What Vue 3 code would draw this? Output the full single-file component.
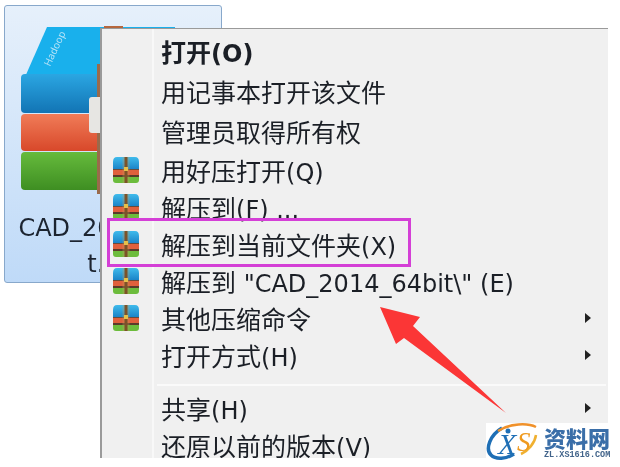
<script setup>
const rows = [
  { label: "打开(O)", h: 40, bold: true },
  { label: "用记事本打开该文件", h: 40 },
  { label: "管理员取得所有权", h: 40 },
  { label: "用好压打开(Q)", h: 37, icon: true },
  { label: "解压到(F) ...", h: 37, icon: true },
  { label: "解压到当前文件夹(X)", h: 37, icon: true },
  { label: "解压到 \"CAD_2014_64bit\\\" (E)", h: 37, icon: true },
  { label: "其他压缩命令", h: 37, icon: true, sub: true },
  { label: "打开方式(H)", h: 38, sub: true },
  { sep: true },
  { label: "共享(H)", h: 37, sub: true },
  { label: "还原以前的版本(V)", h: 38 },
];

// latin runs are set a bit smaller than the CJK ones
const parts = (label) => label.split(/([\x00-\x7f]+)/).filter(Boolean);
const isLatin = (s) => /^[\x00-\x7f]/.test(s);
</script>

<template>
  <div class="page">
    <div class="tile">
      <svg class="book" width="215" height="180" viewBox="0 0 215 180">
        <defs>
          <linearGradient id="blue" x1="0" y1="0" x2="0" y2="1">
            <stop offset="0" stop-color="#2ba6e2" />
            <stop offset="1" stop-color="#1274b4" />
          </linearGradient>
          <linearGradient id="orange" x1="0" y1="0" x2="0" y2="1">
            <stop offset="0" stop-color="#f07c58" />
            <stop offset="1" stop-color="#d8482a" />
          </linearGradient>
          <linearGradient id="green" x1="0" y1="0" x2="0" y2="1">
            <stop offset="0" stop-color="#66bb3c" />
            <stop offset="1" stop-color="#3e8e22" />
          </linearGradient>
        </defs>
        <path d="M42 1 L170 1 L170 60 L16 60 Z" fill="#19b0ec" />
        <rect x="99" y="0" width="19" height="6" fill="#b5673f" />
        <text x="0" y="0" transform="translate(45 41) rotate(-65)" class="book-label">Hadoop</text>
        <rect x="16" y="48" width="84" height="39" rx="4" fill="url(#blue)" />
        <rect x="16" y="88" width="84" height="37" rx="4" fill="url(#orange)" />
        <rect x="16" y="126" width="84" height="38" rx="4" fill="url(#green)" />
        <rect x="92" y="38" width="8" height="130" fill="#9a6a4b" />
        <rect x="84" y="71" width="16" height="36" rx="3" fill="#e7e6e3" />
      </svg>
      <div class="tile-name">CAD_2014_64bi<br />t.rar</div>
    </div>

    <div class="menu">
      <template v-for="(row, i) in rows" :key="i">
        <div v-if="row.sep" class="sep"></div>
        <div v-else class="row" :class="{ bold: row.bold }" :style="{ height: row.h + 'px' }">
          <div class="gutter">
            <svg v-if="row.icon" width="28" height="28" viewBox="0 0 28 28">
              <defs>
                <linearGradient :id="'top' + i" x1="0" y1="0" x2="0" y2="1">
                  <stop offset="0" stop-color="#3fbbec" />
                  <stop offset="1" stop-color="#1b84c8" />
                </linearGradient>
              </defs>
              <path d="M5 1 H23 Q27 1 27 6 V13 H1 V6 Q1 1 5 1 Z" :fill="'url(#top' + i + ')'" />
              <rect x="1" y="13" width="26" height="1" fill="#6a4a3a" />
              <rect x="1" y="14" width="26" height="5" fill="#e0603c" />
              <rect x="1" y="19" width="26" height="2" fill="#5a3a2a" />
              <path d="M1 21 H27 V24 Q27 27 24 27 H4 Q1 27 1 24 Z" fill="#6cbc3c" />
              <rect x="10.5" y="1" width="7" height="26" fill="#c09a5c" opacity="0.35" />
              <rect x="12.5" y="1" width="3" height="26" fill="#7c5228" />
              <rect x="12" y="11" width="4" height="4" fill="#e6c04a" />
            </svg>
          </div>
          <span class="label"><span v-for="(p, k) in parts(row.label)" :key="k" :class="{ latin: isLatin(p) }">{{ p }}</span></span>
          <i v-if="row.sub" class="caret"></i>
        </div>
      </template>
    </div>

    <div class="mark"></div>

    <svg class="arrow" width="130" height="110" viewBox="0 0 130 110">
      <path d="M1 2 L41 12 L34 21 L127 108 L25 33 L17 39 Z" fill="#fb3636" />
    </svg>

    <div class="stamp">
      <svg class="stamp-logo" width="56" height="40" viewBox="0 0 56 40">
        <path d="M16 5 C4 12 -1 26 5 32 C10 37 20 36 28 31" fill="none" stroke="#1f6fb5" stroke-width="3.5" />
        <path d="M12 8 C24 0 42 0 50 4" fill="none" stroke="#f0912a" stroke-width="2.5" />
        <path d="M35 31 C42 28 49 20 50 12" fill="none" stroke="#f0b030" stroke-width="2.5" />
        <circle cx="22" cy="8" r="2.5" fill="#1f6fb5" />
        <text x="12" y="31" class="logo-x">X</text>
        <text x="31" y="28" class="logo-s">S</text>
      </svg>
      <div class="stamp-text">
        <div class="stamp-cn">资料网</div>
        <div class="stamp-url">ZL.XS1616.COM</div>
      </div>
    </div>
  </div>
</template>

<style>
html, body {
  margin: 0;
  background: #fff;
}
</style>

<style scoped>
.page {
  position: relative;
  width: 620px;
  height: 467px;
  overflow: hidden;
  background: #fff;
  font-family: "DejaVu Sans", "Noto Sans CJK SC", sans-serif;
  filter: blur(0.4px);
}

.tile {
  position: absolute;
  left: 4px;
  top: 5px;
  width: 216px;
  height: 276px;
  border: 1px solid #88a8cb;
  border-radius: 3px;
  background: linear-gradient(#e6f0fb, #bfdaf8);
}

.book {
  position: absolute;
  left: 0;
  top: 20px;
}

.book-label {
  font-family: "Open Sans", sans-serif;
  font-size: 10px;
  fill: #bfe6f8;
}

.tile-name {
  position: absolute;
  top: 204px;
  left: 0;
  width: 216px;
  text-align: center;
  font-size: 24px;
  line-height: 36px;
  color: #1c2430;
  white-space: nowrap;
}

.menu {
  position: absolute;
  left: 100px;
  top: 28px;
  width: 508px;
  height: 430px;
  box-sizing: border-box;
  overflow: hidden;
  padding-top: 2px;
  background: #f0f0f0;
  border-top: 1px solid #9a9a9a;
  border-left: 2px solid #9a9a9a;
}

.row {
  position: relative;
  display: flex;
  align-items: center;
}

.gutter {
  flex: none;
  box-sizing: border-box;
  width: 59px;
  height: 100%;
  display: flex;
  align-items: center;
  padding-left: 10px;
  font-size: 0;
}

.label {
  font-size: 25px;
  color: #1b1f26;
  white-space: nowrap;
}

.latin {
  font-size: 24px;
}

.bold .label {
  font-weight: 700;
}

.caret {
  position: absolute;
  left: 483px;
  top: 50%;
  margin-top: -5px;
  border-left: 6px solid #222;
  border-top: 5px solid transparent;
  border-bottom: 5px solid transparent;
}

.sep {
  height: 2px;
  margin: 10px 2px 3px 55px;
  background: #fafafa;
}

.menu::before {
  content: "";
  position: absolute;
  left: 50px;
  top: 0;
  bottom: 0;
  width: 2px;
  background: #f8f8f8;
}

.mark {
  position: absolute;
  left: 107px;
  top: 218px;
  width: 298px;
  height: 43px;
  border: 3px solid #d43fd6;
}

.arrow {
  position: absolute;
  left: 379px;
  top: 305px;
}

.stamp {
  position: absolute;
  left: 486px;
  top: 423px;
  width: 134px;
  height: 44px;
  display: flex;
  background: #fff;
}

.stamp-logo {
  flex: none;
}

.logo-x {
  font-family: "Liberation Serif", serif;
  font-style: italic;
  font-size: 30px;
  fill: #1f6fb5;
}

.logo-s {
  font-family: "Liberation Serif", serif;
  font-style: italic;
  font-size: 27px;
  fill: #ef9a1f;
}

.stamp-text {
  display: flex;
  flex-direction: column;
  align-items: flex-start;
  padding: 1px 0 0 2px;
}

.stamp-cn {
  font-family: "Noto Sans CJK SC", sans-serif;
  font-size: 22px;
  line-height: 26px;
  font-weight: 900;
  color: #3a6ea8;
}

.stamp-url {
  font-family: "Liberation Mono", monospace;
  font-size: 8.5px;
  line-height: 10px;
  font-weight: 700;
  color: #41638a;
}
</style>
